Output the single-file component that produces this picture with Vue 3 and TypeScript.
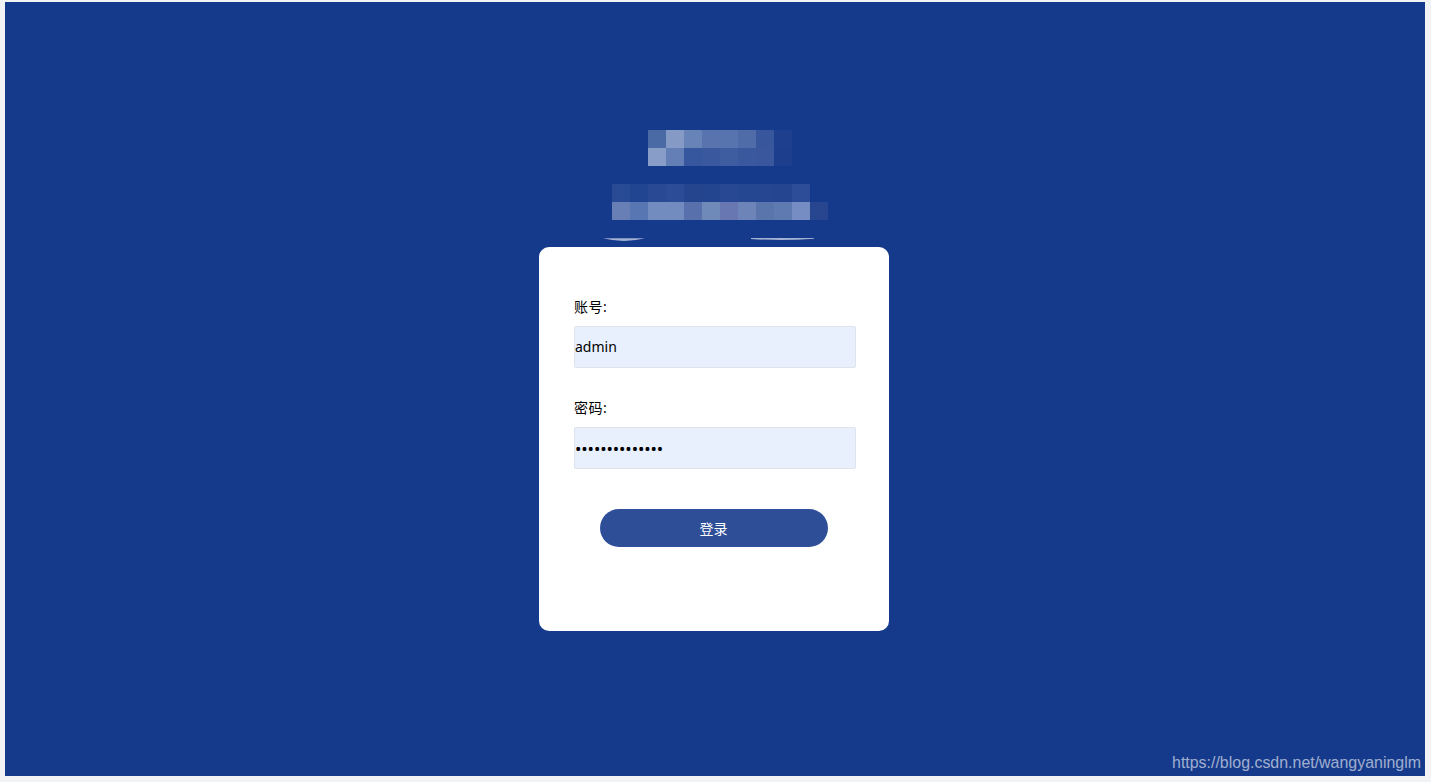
<script setup lang="ts">
import { ref } from 'vue'

const account = ref('admin')
const password = ref('admin123456789')

const mosaicTop: string[][] = [
  ['#4a6aa6', '#869ac6', '#6883b8', '#5873ad', '#5874af', '#4f6ba8', '#38569b', '#1d3f8d'],
  ['#899dc9', '#647fb6', '#36569d', '#3a589d', '#3e5da1', '#3a589e', '#3a579e', '#1c3e8c'],
]
const mosaicBottom: string[][] = [
  ['#294b95', '#224591', '#2a4994', '#2c4c97', '#25458f', '#23458f', '#284894', '#254792', '#274691', '#264590', '#2d4d98', '#163a8b'],
  ['#687fb5', '#5876b1', '#738cbf', '#738cbf', '#5870ac', '#6f8ab9', '#6876b1', '#6d84b9', '#5a75ac', '#5e7ab1', '#758dc2', '#28458f'],
]
</script>

<template>
  <div class="page">
    <main class="stage">
      <div class="brand">
        <div class="mosaic mosaic-top">
          <div v-for="(row, r) in mosaicTop" :key="r" class="mosaic-row">
            <span v-for="(c, i) in row" :key="i" class="cell" :style="{ background: c }"></span>
          </div>
        </div>
        <div class="mosaic mosaic-bottom">
          <div v-for="(row, r) in mosaicBottom" :key="r" class="mosaic-row">
            <span v-for="(c, i) in row" :key="i" class="cell" :style="{ background: c }"></span>
          </div>
        </div>
        <svg class="slivers" width="350" height="3" viewBox="0 0 350 3" aria-hidden="true">
          <path d="M64 0.2 L106 0.2 Q85 5.6 64 0.2Z" fill="#a3b2d4" />
          <path d="M212 0.1 L275 0.1 L275 0.7 Q243 3.4 212 0.9Z" fill="#a3b2d4" />
        </svg>
      </div>
      <form class="card" @submit.prevent>
        <label class="field">
          <span class="label">账号:</span>
          <input v-model="account" class="input" type="text" />
        </label>
        <label class="field field-second">
          <span class="label">密码:</span>
          <input v-model="password" class="input input-secret" type="password" />
        </label>
        <button class="submit" type="submit">登录</button>
      </form>
    </main>
    <div class="watermark">https://blog.csdn.net/wangyaninglm</div>
  </div>
</template>

<style>
html, body { margin: 0; padding: 0; background: #f1f3f4; }
</style>

<style scoped>
.page {
  position: relative;
  box-sizing: border-box;
  height: 782px;
  padding: 2px 6px 6px 5px;
  font-family: "Noto Sans", "Noto Sans CJK SC", sans-serif;
  font-size: 14px;
  overflow: hidden;
}
.stage {
  box-sizing: border-box;
  height: 774px;
  padding: 128px 2px 0 0;
  background: #153a8b;
  display: flex;
  flex-direction: column;
  align-items: center;
}
.brand { width: 350px; }
.mosaic-top { padding-left: 109px; }
.mosaic-bottom { padding: 18px 0 0 73px; }
.mosaic-row { display: flex; }
.cell { width: 18px; height: 18px; flex: none; }
.slivers { display: block; margin-top: 18px; }
.card {
  box-sizing: border-box;
  width: 350px;
  height: 384px;
  margin-top: 6px;
  padding: 51px 33px 0 35px;
  background: #fff;
  border-radius: 10px;
}
.field { display: block; }
.field-second { margin-top: 31px; }
.label {
  display: block;
  height: 18px;
  line-height: 18px;
  margin-bottom: 10px;
  color: #000;
  font-size: 14px;
  letter-spacing: 0.5px;
}
.input {
  box-sizing: border-box;
  display: block;
  width: 282px;
  height: 42px;
  padding: 0 0 2px;
  border: 1px solid #dfe3ea;
  border-radius: 2px;
  background: #e8f0fe;
  color: #000;
  font: inherit;
  font-size: 14px;
  outline: none;
}
.input-secret {
  padding: 0;
  font-size: 17px;
  letter-spacing: -0.1px;
}
.submit {
  display: block;
  width: 228px;
  height: 38px;
  margin: 40px 0 0 26px;
  border: 0;
  border-radius: 19px;
  background: #2e4f98;
  color: #fff;
  font: inherit;
  font-size: 14px;
  padding: 0 1px 1px 0;
}
.watermark {
  position: absolute;
  right: 10px;
  top: 753px;
  font-family: "Liberation Sans", Arial, sans-serif;
  font-size: 15.94px;
  line-height: 20px;
  color: rgba(255, 255, 255, 0.6);
}
</style>
